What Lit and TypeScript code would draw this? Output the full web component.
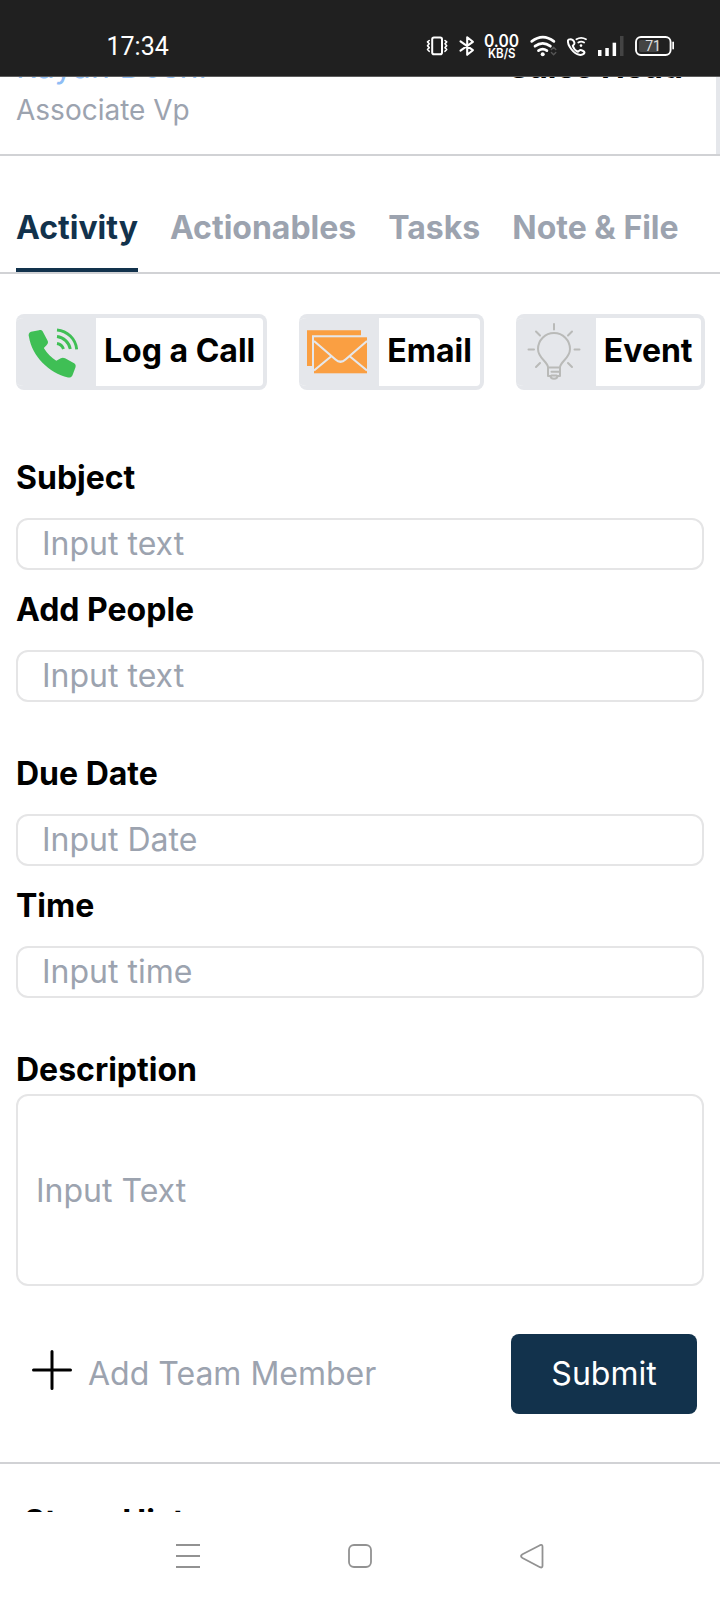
import { LitElement, html, css } from "lit";
import { customElement } from "lit/decorators.js";

@customElement("app-root")
export class AppRoot extends LitElement {
  static styles = css`
    :host { display: block; width: 720px; height: 1600px; overflow: hidden; background: #fff; font-family: Inter, sans-serif; font-size: 32px; line-height: 48px; color: #000; }
    * { box-sizing: border-box; }
    svg { display: block; flex: none; }
    .screen { display: flex; flex-direction: column; height: 1600px; }
    .status { flex: none; height: 77px; background: #202020; color: #fff; display: flex; align-items: flex-start; justify-content: space-between; padding: 28px 46px 0 106.5px; line-height: 36px; border-bottom: 1px solid #5c5c5c; }
    .clock { font-size: 25px; font-family: Roboto, sans-serif; padding-top: 1px; }
    .view { flex: none; height: 1435px; overflow: hidden; display: flex; flex-direction: column; }
    .person { flex: none; height: 79px; display: flex; justify-content: space-between; border-bottom: 2px solid #d1d2d5; overflow: hidden; }
    .who { flex: 1; padding: 0 33px 0 16px; border-right: 4px solid #e5e7eb; display: flex; flex-direction: column; }
    .names { display: flex; justify-content: space-between; height: 14px; align-items: flex-end; }
    .name { color: #8fbdf5; letter-spacing: 0.3px; }
    .role { font-weight: 700; }
    .sub { color: #9ca3af; font-size: 28px; line-height: 38px; }
    .tabs { flex: none; height: 118px; display: flex; gap: 32px; padding: 48px 16px 0; border-bottom: 2px solid #d1d2d5; font-weight: 700; color: #9ca3af; }
    .tab { height: 68px; white-space: nowrap; }
    .tab.on { color: #12324c; border-bottom: 4px solid #12324c; }
    .actions { flex: none; display: flex; gap: 32px; padding: 40px 15px 0 16px; }
    .action { display: flex; height: 76px; border-radius: 8px; border: 4px solid #e5e7eb; border-left: 0; background: #fff; font-weight: 700; overflow: hidden; white-space: nowrap; }
    .pic { width: 80px; background: #e5e7eb; display: flex; align-items: center; }
    .word { padding: 9px 8px 0; }
    .form { flex: none; padding: 64px 16px 0; display: flex; flex-direction: column; }
    .label { font-weight: 700; }
    .pair { display: flex; flex-direction: column; gap: 16px; margin-bottom: 48px; }
    .box { height: 52px; border: 2px solid #e5e5e6; border-radius: 12px; color: #9ca3af; padding: 0 24px; }
    .area { height: 192px; border: 2px solid #e5e5e6; border-radius: 12px; color: #9ca3af; padding: 71px 18px 0; }
    .foot { flex: none; height: 178px; padding: 48px 23px 0 32px; display: flex; justify-content: space-between; border-bottom: 2px solid #d1d2d5; }
    .team { display: flex; gap: 16px; color: #9ca3af; padding-top: 16px; }
    .submit { width: 186px; height: 80px; border-radius: 8px; background: #12324c; color: #fff; text-align: center; line-height: 80px; }
    .stage { padding: 34px 24px 0; font-weight: 700; }
    .nav { flex: none; height: 88px; background: #fff; }
  `;

  private field(label: string, hint: string) {
    return html`<div class="label">${label}</div><div class="box">${hint}</div>`;
  }

  render() {
    return html`<div class="screen">
      <div class="status">
        <span class="clock">17:34</span>
        <svg width="248" height="36" viewBox="426 28 248 36" fill="none" stroke="#fff" stroke-width="2" stroke-linecap="round" stroke-linejoin="round">
          <rect x="432.2" y="37.600" width="9.800" height="16.600" rx="1.800"/>
          <path d="M429.200 40.500l-1.700 1.400 1.700 1.900-1.700 1.900 1.700 1.900-1.700 1.900 1.700 1.800M445 40.500l1.700 1.400-1.700 1.900 1.700 1.900-1.700 1.900 1.700 1.900-1.700 1.800" stroke-width="1.600"/>
          <path d="M460.500 41.300l12.400 8.900-5.700 4.600V37.200l5.700 4.600-12.400 8.900" stroke-width="2.100"/>
          <g fill="#fff" stroke="none" font-family="Inter, sans-serif">
            <text x="484" y="46.500" font-size="16.800" font-weight="600" textLength="35" lengthAdjust="spacingAndGlyphs">0.00</text>
            <text x="488" y="58" font-size="13" font-weight="600" textLength="27.500" lengthAdjust="spacingAndGlyphs">KB/S</text>
          </g>
          <g stroke-width="2.700">
            <path d="M531.700 41.400q11.200-8.400 22.200 0M535 46.200q7.700-5.800 15.400 0M538.500 50.600q4.200-3 8.400 0"/>
            <circle cx="542.700" cy="54.200" r="2" fill="#fff" stroke="none"/>
          </g>
          <path d="M551.400 49.400l2.200-2.200 2.200 2.200M551.400 52.600l2.200 2.200 2.200-2.200" stroke="#555" stroke-width="1.400"/>
          <path d="M568 40.200c-.8 5 5.500 13.600 11.300 14.600c2.500.4 5-.8 5.200-2.300c.1-1.100-3.300-2.800-4.700-2.300l-1.900 1.600c-2.400-1-4.500-3.600-5.200-6l1.500-1.700c.8-1.400-.9-4.500-2.500-4.700c-1.500-.1-3.400-.2-3.700.8Z" stroke-width="2"/>
          <path d="M576.400 39.300q4.800-3 9.600 0M578.300 42.600q2.900-1.800 5.800 0" stroke-width="1.800"/>
          <circle cx="581" cy="45.600" r="1.300" fill="#fff" stroke="none"/>
          <g fill="#fff" stroke="none"><rect x="598" y="50" width="3.500" height="6"/><rect x="605.300" y="48" width="3.500" height="8"/><rect x="612.600" y="42.700" width="3.500" height="13.300"/><rect x="620" y="36" width="3.500" height="20" fill="#444"/></g>
          <rect x="636" y="37" width="34.600" height="18" rx="5" stroke-width="1.900"/>
          <rect x="639" y="40" width="20" height="12" rx="2" fill="#444" stroke="none"/>
          <path d="M673.200 42.500v6" stroke-width="1.800"/>
          <text x="653" y="51" font-size="14" text-anchor="middle" fill="#ddd" stroke="none" font-family="Roboto, sans-serif">71</text>
        </svg>
      </div>
      <div class="view">
        <div class="person">
          <div class="who">
            <div class="names"><span class="name">Rayan Doshi</span><span class="role">Sales Head</span></div>
            <div class="sub">Associate Vp</div>
          </div>
        </div>
        <div class="tabs">
          <div class="tab on">Activity</div><div class="tab">Actionables</div><div class="tab">Tasks</div><div class="tab">Note &amp; File</div>
        </div>
        <div class="actions">
          <div class="action"><div class="pic">
            <svg width="80" height="76" viewBox="16 314 80 76" fill="#3fbf55">
              <path d="M29 337c-1-2.500 0-4.500 2-5.200l8-1.600c2-.4 3.200.2 4 1.800l4.500 8.600c1 1.900.5 3.200-1 4.700l-2.700 2.700c3 5 8 10 12.500 12.700l4.500-2.400c1.500-.9 2.800-.8 4.300 0l9 5c1.500.9 1.900 2.200 1.400 3.900l-3 8c-.8 2-2.500 2.600-4.500 2.300C49 373 32 356 29 337Z"/>
              <path d="M57 343.500a8.500 8.500 0 0 1 6.500 5.500M57 336.500a15.500 15.500 0 0 1 13.300 12.500M57 330a21.500 21.500 0 0 1 19.700 19.300" fill="none" stroke="#3fbf55" stroke-width="2.900"/>
            </svg></div><div class="word">Log a Call</div></div>
          <div class="action"><div class="pic">
            <svg width="80" height="76" viewBox="299 314 80 76">
              <path d="M307 330.300h54v5h-49v30.700h-5Z" fill="#fa9f42"/>
              <rect x="314" y="337.300" width="53" height="36" fill="#fa9f42"/>
              <path d="M314 341l21.500 18.500q5 4.500 10 0L367 341M314 370.500l17-14M367 370.500l-17-14" fill="none" stroke="#e5e7eb" stroke-width="2.200"/>
            </svg></div><div class="word">Email</div></div>
          <div class="action"><div class="pic">
            <svg width="80" height="76" viewBox="516 314 80 76" fill="none" stroke="#b9bab8" stroke-width="2" stroke-linecap="round" stroke-linejoin="round">
              <path d="M548 367.500c0-6-10-9-10-18.500a16 16 0 0 1 32 0c0 9.500-10 12.500-10 18.500ZM548 367.500v8.500h2.500c0 3.500 7 3.500 7 0h2.500v-8.500M551.500 371.800h8M551.500 375.500h5"/>
              <path d="M554 324v5.500M536 331.500l4 4M572 331.500l-4 4M528.500 349.500h5.500M574.500 349.500h5M536 367l4-4M572 367l-4-4"/>
            </svg></div><div class="word">Event</div></div>
        </div>
        <div class="form">
          <div class="pair">${this.field("Subject", "Input text")}${this.field("Add People", "Input text")}</div>
          <div class="pair">${this.field("Due Date", "Input Date")}${this.field("Time", "Input time")}</div>
          <div class="label">Description</div>
          <div class="area">Input Text</div>
        </div>
        <div class="foot">
          <div class="team">
            <svg width="40" height="40" viewBox="0 0 40 40" stroke="#000" stroke-width="3" stroke-linecap="round"><path d="M20 1.500v37M1.500 20h37"/></svg>
            <span>Add Team Member</span>
          </div>
          <div class="submit">Submit</div>
        </div>
        <div class="stage">Stage History</div>
      </div>
      <div class="nav">
        <svg width="720" height="88" viewBox="0 1512 720 88" fill="none" stroke="#929292" stroke-width="1.800" stroke-linejoin="round">
          <path d="M176 1545h24M176 1556h24M176 1567h24"/>
          <rect x="349" y="1545" width="22" height="22" rx="5"/>
          <path d="M522.500 1554.200L540 1545.200q2.500-1 2.500 1.500v19q0 2.500-2.500 1.500L522.500 1558q-3-1.900 0-3.800Z"/>
        </svg>
      </div>
    </div>`;
  }
}
